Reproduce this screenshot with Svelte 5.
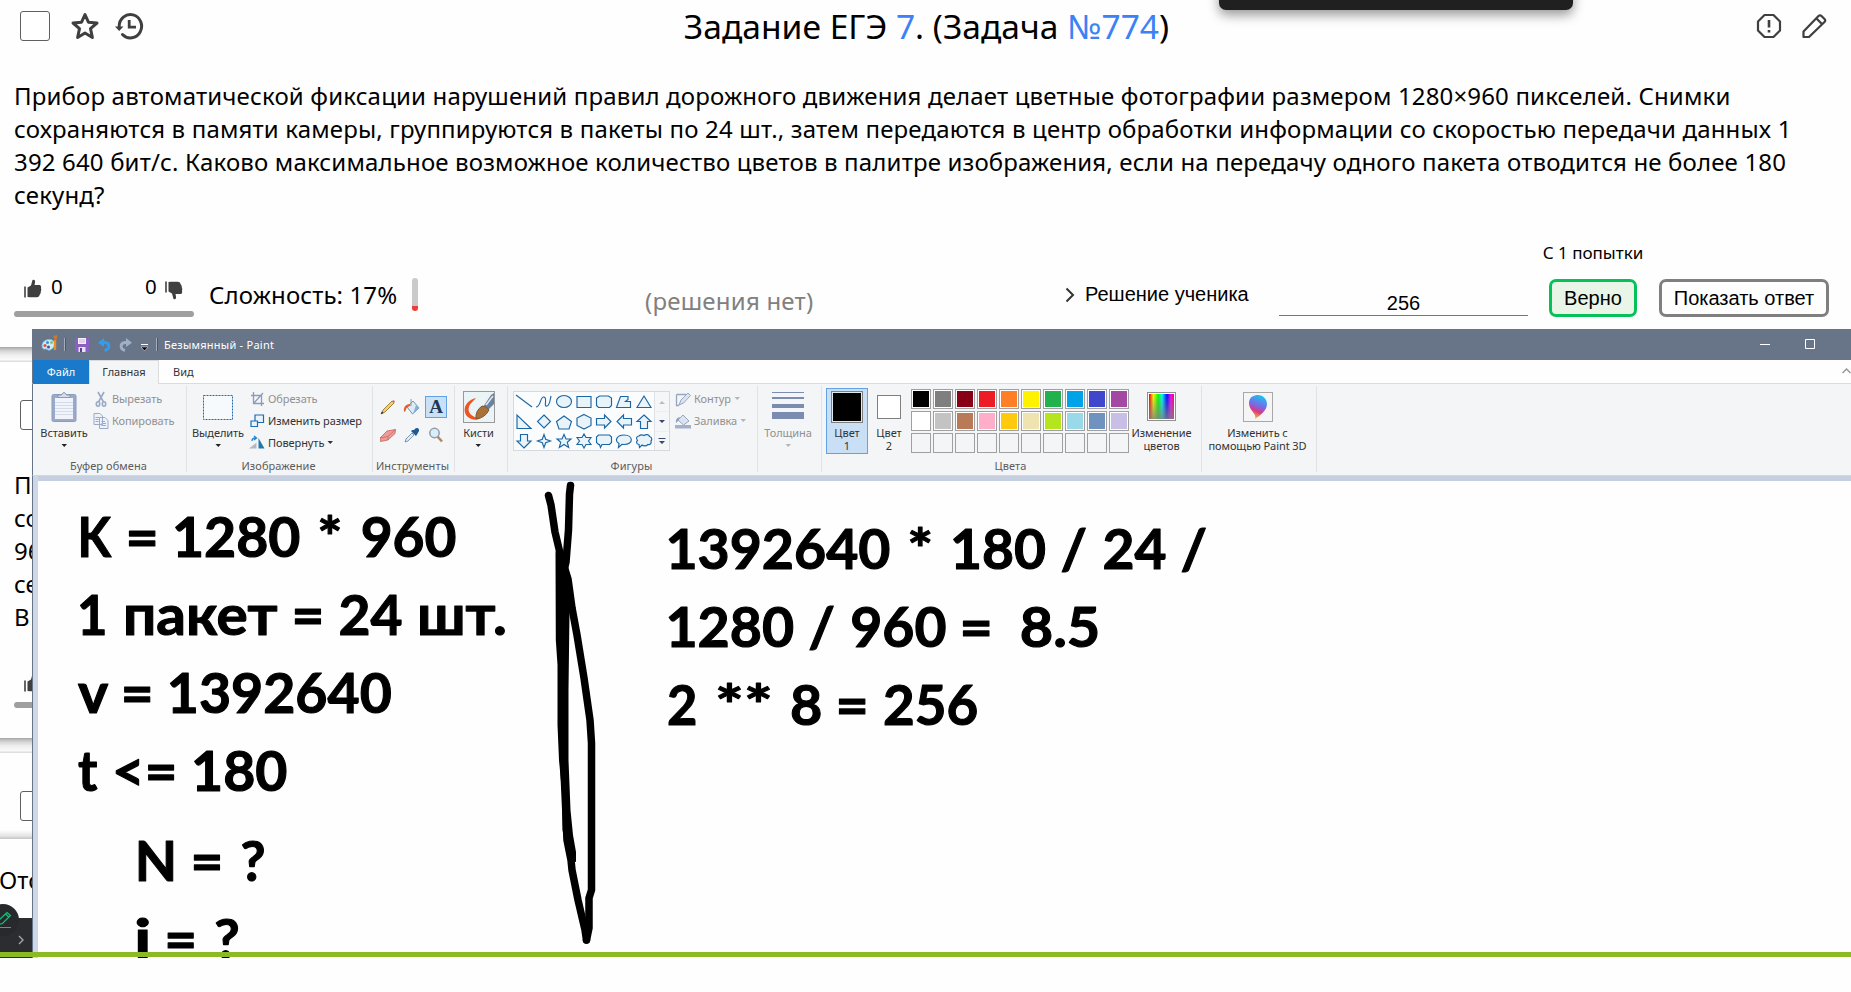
<script>
  const palette = [
    ['#000000', '#7f7f7f', '#880015', '#ed1c24', '#ff7f27', '#fff200', '#22b14c', '#00a2e8', '#3f48cc', '#a349a4'],
    ['#ffffff', '#c3c3c3', '#b97a57', '#ffaec9', '#ffc90e', '#efe4b0', '#b5e61d', '#99d9ea', '#7092be', '#c8bfe7'],
    ['', '', '', '', '', '', '', '', '', '']
  ];

  const shapes = [
    'M2 3L18 15',
    'M2 15C7 15 6 4 10 5C14 6 9 15 13 14C16 13 16 8 17 4',
    'M2.5 9.5A7.5 6 0 1 1 17.5 9.5A7.5 6 0 1 1 2.5 9.5Z',
    'M3 4.5H17V15.5H3Z',
    'M5.500 4H14.500L17.500 6V13.500L15.500 15.500H4.500L2.500 13.500V6Z',
    'M6.500 4.500H14V7.500L11.500 9.500H16.500V15.500H2.500Z',
    'M10 4L17 15.500H3Z',
    'M3 3V16.500H17Z',
    'M10 3L16.500 9.500L10 16L3.500 9.500Z',
    'M10 4L17.500 9.500L15 17H5L2.500 9.500Z',
    'M10 2.500L17 6V13.500L10 17L3 13.500V6Z',
    'M2.500 6.500H10.500V3L17 9.500L10.500 16V13H2.500Z',
    'M17.500 6.500H9.500V3L3 9.500L9.500 16V13H17.500Z',
    'M10 3L17 9.500H13.500V16.500H6.500V9.500H3Z',
    'M10 17L17 10H13.500V3.500H6.500V10H3Z',
    'M10 3.500L11.700 8.300L16.500 10L11.700 11.700L10 16.500L8.300 11.700L3.500 10L8.300 8.300Z',
    'M10 3.500L12 8H17L13.300 11.300L14.700 16.500L10 13.500L5.300 16.500L6.700 11.300L3 8H8Z',
    'M10 3L12 6.500H17L14.500 10L17 13.500H12L10 17L8 13.500H3L5.500 10L3 6.500H8Z',
    'M4.500 4H15.500L17.500 6V11.500L15.500 13.500H8L6.500 16.500L5.500 13.500H4.500L2.500 11.500V6Z',
    'M10 4C19.500 4 20 13.500 10 13.500L8 13.300L4.500 16.500L5 12.500C0 9.500 3 4 10 4Z',
    'M5 5C7 3 9 4 10 4.500C12 3 15 3.500 15.500 5.500C18.500 6.500 18 9 17 10C18 13 15.500 14 14 13.500C12 15.500 9 15 8 14L5.500 16.500L5 13.500C2 13 2 10.500 3.500 9.500C1.500 7 3 5 5 5Z'
  ];

  // Each word of a handwritten line: text, left edge, right edge
  const notes = [
    { y: 556.5, words: [['K', 81, 111], ['=', 128.5, 155.8], ['1280', 176, 299], ['*', 318.3, 341.6], ['960', 362.2, 455]] },
    { y: 634.5, words: [['1', 81, 106], ['пакет', 126, 277.6], ['=', 294.6, 321.5], ['24', 340, 401], ['шт.', 420, 504]] },
    { y: 712.5, words: [['v', 77.9, 106.8], ['=', 123.8, 150.7], ['1392640', 170.8, 390.3]] },
    { y: 790.5, words: [['t', 77.9, 97.3], ['<=', 115, 174.4], ['180', 195, 286]] },
    { y: 880.5, words: [['N', 138.8, 173.2], ['=', 193.4, 220.3], ['?', 240.4, 264.5]] },
    { y: 958.5, words: [['i', 138, 147.5], ['=', 167.3, 194.2], ['?', 214.3, 238.8]] },
    { y: 568.5, words: [['1392640', 669.4, 889], ['*', 908.2, 932.2], ['180', 953.9, 1044.5], ['/', 1060.4, 1087], ['24', 1104, 1165], ['/', 1180.4, 1207]] },
    { y: 646.5, words: [['1280', 669.4, 792.7], ['/', 808.2, 835], ['960', 851.8, 945], ['=', 962.4, 989.8], ['8.5', 1021.2, 1098.8]] },
    { y: 724.5, words: [['2', 668.6, 696], ['**', 716, 771.8], ['8', 791.4, 820.8], ['=', 838.4, 865.7], ['256', 884.5, 976.7]] }
  ];

  // Side bearings on the left and on the right of a word
  function bearing(c) {
    if (c === '=' || c === '<=') return [3, 3];
    if (c === '/' || c === 'v' || c === 't') return [0, 0];
    if (c[0] === '*') return [1, 1];
    if (c === 'K') return [3.5, 0];
    if (c === 'N' || c === 'i') return [4, 4];
    if (c[0] === '1') return [4, 1.5];
    if (c === 'пакет') return [3, 0];
    if (c === 'шт.') return [3, 3];
    if (c === '?') return [0, 1];
    return [1.5, 1.5];
  }
</script>

{#snippet thumb(down)}
  <svg class="thumb" class:down width="18" height="19" viewBox="0 0 18 19">
    <path d="M1 7.500V18.500" stroke="#3f3f3f" stroke-width="1.600" />
    <path d="M3.500 18V8.500L7 6.500L8.500 1Q11.500 0 11 3.500L10.500 6H16Q17.800 7 17 9.500Q17.800 11 16.800 12.500Q17 14.500 15.800 15.500Q15.500 18 13 18.200H6Z" fill="#3f3f3f" />
  </svg>
{/snippet}

{#snippet caret()}
  <svg class="caret" width="7" height="4" viewBox="0 0 7 4"><path d="M.5 0H6L3.250 3Z" fill="currentColor" /></svg>
{/snippet}

<div class="page">
  <section class="card first">
    <header>
      <div class="tools-left">
        <span class="check"></span>
        <svg width="30" height="30" viewBox="0 0 30 30" fill="none" stroke="#3f3f3f" stroke-width="3" stroke-linejoin="round"><path d="M15 3.500L18.400 11.200L27 12L20.500 17.600L22.400 26.500L15 21.900L7.600 26.500L9.500 17.600L3 12L11.600 11.200Z" /></svg>
        <svg width="30" height="30" viewBox="0 0 30 30" fill="none" stroke="#3f3f3f" stroke-width="3"><path d="M5.200 15.500A11.200 11.700 0 1 1 8.500 23.500" stroke-linecap="round" /><path d="M1 15.500H9.500L5.200 20Z" fill="#3f3f3f" stroke="none" /><path d="M15.200 9V16.200H22" stroke-width="2.800" /></svg>
      </div>
      <h1>Задание ЕГЭ <a>7</a>. (Задача <a>№774</a>)</h1>
      <div class="tools-right">
        <svg width="26" height="26" viewBox="0 0 26 26" fill="none" stroke="#3f3f3f" stroke-width="2.200"><path d="M8.500 2H17.500L24 8.500V17.500L17.500 24H8.500L2 17.500V8.500Z" stroke-linejoin="round" /><path d="M13 7V14.500M13 17V19.500" stroke-width="2.600" /></svg>
        <svg width="26" height="26" viewBox="0 0 26 26" fill="none" stroke="#3f3f3f" stroke-width="2.200" stroke-linejoin="round"><path d="M2.500 24V18.500L17.500 3Q19 1.500 20.500 3L23.500 6Q25 7.500 23.500 9L8 24Z" /><path d="M15.500 5.500L21 11" /></svg>
      </div>
    </header>
    <p class="task">Прибор автоматической фиксации нарушений правил дорожного движения делает цветные фотографии размером 1280×960 пикселей. Снимки<br />сохраняются в памяти камеры, группируются в пакеты по 24 шт., затем передаются в центр обработки информации со скоростью передачи данных 1<br />392 640 бит/с. Каково максимальное возможное количество цветов в палитре изображения, если на передачу одного пакета отводится не более 180<br />секунд?</p>
    <div class="row">
      <div class="votes">
        <div class="counts">
          {@render thumb(false)}<span>0</span><span class="second">0</span>{@render thumb(true)}
        </div>
        <div class="votebar"></div>
      </div>
      <div class="level">Сложность: 17%</div>
      <div class="meter"></div>
      <div class="none">(решения нет)</div>
      <div class="student">
        <svg width="11" height="16" viewBox="0 0 11 16" fill="none" stroke="#333" stroke-width="2"><path d="M1.500 1.500L8 8L1.500 14.500" /></svg>
        <span>Решение ученика</span>
      </div>
      <div class="answer">256</div>
      <div class="attempt"><span>С 1 попытки</span><button class="ok">Верно</button></div>
      <button class="show">Показать ответ</button>
    </div>
  </section>
  <div class="gap"></div>

  <section class="card second-card">
    <span class="check"></span>
    <p>Прибор<br />сохран<br />960 пи<br />секунд<br />В отве</p>
    <div class="icon-row">{@render thumb(false)}</div>
    <div class="votebar"></div>
  </section>
  <div class="gap"></div>
  <section class="card third"><span class="check"></span></section>
  <div class="sent">Отсут</div>

  <div class="dark-dock"><svg width="7" height="10" viewBox="0 0 7 10" fill="none" stroke="#a5a5a8" stroke-width="1.400"><path d="M1 1L5 5L1 9" /></svg></div>
  <div class="dark-round">
    <svg width="18" height="18" viewBox="0 0 18 18" fill="none" stroke="#12c27b" stroke-width="1.200"><path d="M1 14L3 9L11 1.500L14.500 4.500L6.500 12.500ZM9.500 3L12.800 6M0 16.500H15" /></svg>
  </div>
  <div class="top-dock"></div>

  <div class="paint">
    <div class="titlebar">
      <svg class="logo" width="18" height="18" viewBox="0 0 18 18"><path d="M1 11C1 6 6 3.500 11 5C16 7 14 13 9 15C7 16 6 13.500 4.500 14C2.500 14.500 1 13.500 1 11Z" fill="#c9eaf6" stroke="#6bbbe0" stroke-width=".8" /><circle cx="4" cy="10.500" r="1.500" fill="#e94b35" /><circle cx="6.500" cy="7.500" r="1.500" fill="#3b8ede" /><circle cx="10.500" cy="7.500" r="1.300" fill="#71bf44" /><circle cx="7.500" cy="12" r="1.500" fill="#4a4f9e" /><path d="M14 5V15" stroke="#ef8a28" stroke-width="2.400" /><path d="M12 1L16 0V4L14 5Z" fill="#c7793c" /></svg>
      <i></i>
      <svg class="save" width="14" height="14" viewBox="0 0 14 14"><path d="M0 0H14V14H2L0 12Z" fill="#8861c2" /><path d="M3 0H11V6H3Z" fill="#f7f0fa" /><path d="M4 2H10M4 4H10" stroke="#c9b6dd" /><path d="M3.500 9H10.500V14H3.500Z" fill="#e9e2f2" /><path d="M5 10H7V14H5Z" fill="#5c3d91" /></svg>
      <svg class="undo" width="13" height="14" viewBox="0 0 13 14" fill="none"><path d="M2 4.500H7C12 5 12.500 11 6.500 12.500" stroke="#2f9df0" stroke-width="2.800" /><path d="M0 4.800L6 0V9Z" fill="#2f9df0" /></svg>
      <svg class="redo" width="13" height="14" viewBox="0 0 13 14" fill="none"><path d="M10 4.500H6C1 5 .5 11 6 12.500" stroke="#9fafc6" stroke-width="2.800" /><path d="M13 4.800L7 0V9Z" fill="#9fafc6" /></svg>
      <svg class="more" width="7" height="7" viewBox="0 0 7 7"><path d="M0 .5H7" stroke="#fff" /><path d="M0 3H7L3.500 6.800Z" fill="#000" stroke="#fff" stroke-width=".5" /></svg>
      <i></i>
      <span>Безымянный - Paint</span>
      <svg class="win" width="56" height="11" viewBox="0 0 56 11" fill="none" stroke="#fff"><path d="M0 5.500H10M45.500 .5H54.500V9.500H45.500Z" /></svg>
    </div>
    <div class="tabs">
      <span class="file">Файл</span><span class="home">Главная</span><span class="view">Вид</span>
      <svg width="9" height="6" viewBox="0 0 9 6" fill="none" stroke="#999" stroke-width="1.500"><path d="M.5 5L4.500 1L8.500 5" /></svg>
    </div>

    <div class="ribbon">
      <div class="group g1">
        <div class="body">
          <div class="big">
            <svg width="26" height="32" viewBox="0 0 26 32"><rect x="1" y="3.500" width="24" height="27" rx="1.500" fill="#9aabc9" stroke="#8c9cbb" /><path d="M4 7H22V28H4Z" fill="#f1f4fa" /><path d="M4 11.500H22M4 14.500H22M4 17.500H22M4 20.500H22M4 23.500H22" stroke="#d3dbea" /><path d="M7 6.500V4H10.500Q13 -1 15.500 4H19V6.500Z" fill="#d6deeb" stroke="#8797b6" /></svg>
            <b>Вставить</b>{@render caret()}
          </div>
          <div class="list dim">
            <div><svg width="16" height="16" viewBox="0 0 16 16" fill="none" stroke="#9aa9c4" stroke-width="1.600"><path d="M5 1L10.500 11M11 1L5.500 11" /><ellipse cx="5" cy="13" rx="1.700" ry="2.200" /><ellipse cx="11" cy="13" rx="1.700" ry="2.200" /></svg><b>Вырезать</b></div>
            <div><svg width="16" height="16" viewBox="0 0 16 16" fill="#eef2f9" stroke="#9aabc9"><path d="M1 .5H7L9.500 3V11.500H1ZM6.500 4.500H12L15 7.500V15.500H6.500Z" /><path d="M2.500 4.500H6M2.500 6.500H5.500M2.500 8.500H5.500M8.500 8.500H12M8.500 10.500H13M8.500 12.500H13" /></svg><b>Копировать</b></div>
          </div>
        </div>
        <footer>Буфер обмена</footer>
      </div>

      <div class="group g2">
        <div class="body">
          <div class="big">
            <svg width="32" height="32" viewBox="0 0 32 32"><rect x="1.500" y="4.500" width="29" height="24" fill="#f6fafd" stroke="#1f6ab0" stroke-dasharray="2 1" /></svg>
            <b>Выделить</b>{@render caret()}
          </div>
          <div class="list">
            <div class="dim"><svg width="16" height="16" viewBox="0 0 16 16" fill="none" stroke="#8b9bb9"><path d="M4.500 1V12.500H15M2 4.500H12.500V15M4.500 12.500L14 2" stroke-width="1.300" /></svg><b>Обрезать</b></div>
            <div><svg width="16" height="16" viewBox="0 0 16 16" fill="#e9f3fb" stroke="#1f6ab0" stroke-width="1.200"><path d="M6 2H14.500V9.500H6Z" /><path d="M2 8H8.500V13.500H2Z" /></svg><b>Изменить размер</b></div>
            <div><svg width="16" height="16" viewBox="0 0 16 16"><path d="M0 13.500L7.500 7.500V13.500Z" fill="#b4b8bf" /><path d="M9.500 3L15.500 13.500H9.500Z" fill="#1e7aa8" /><path d="M3 6Q3 3 6.500 3M5 1L7.500 3L5 5" fill="none" stroke="#2583d3" stroke-width="1.300" /></svg><b>Повернуть</b>{@render caret()}</div>
          </div>
        </div>
        <footer>Изображение</footer>
      </div>

      <div class="group g3">
        <div class="toolgrid">
          <span><svg width="16" height="16" viewBox="0 0 16 16"><path d="M1 15L3 11L12 2L14 4L5 13Z" fill="#f4cf63" stroke="#8d6b2c" stroke-width=".8" /><path d="M12 2L14 4L15 2.500L13.500 1Z" fill="#d7736c" /><path d="M1 15L2 12.500L3.500 14Z" fill="#222" /></svg></span>
          <span><svg width="18" height="16" viewBox="0 0 18 16"><path d="M4 8L10 2L16 9L9.500 15Z" fill="#dcebf5" stroke="#6d96b8" /><path d="M8 0V7" stroke="#7e9db4" /><path d="M1 13Q0 6 6 5L8 6L3.500 9Q3 12 1 13Z" fill="#ea5a2b" /><path d="M13 6L16 9L10 15Z" fill="#82b4d6" /></svg></span>
          <span class="on"><em>A</em></span>
          <span><svg width="16" height="16" viewBox="0 0 16 16"><path d="M0 11L7 4L15.500 2.500L15 6.500L8 13L.5 14.500Z" fill="#ee9b98" stroke="#c4625f" stroke-width=".8" /><path d="M0 11L8 9.500L15.500 2.500M8 9.500V13" fill="none" stroke="#c4625f" stroke-width=".7" /></svg></span>
          <span><svg width="16" height="16" viewBox="0 0 16 16"><path d="M1 15L2 12L8 6L10 8L4 14Z" fill="#dfeaf2" stroke="#5d83a1" stroke-width=".8" /><path d="M7 4L12 9L13 7.500L15 4Q15.500 1.500 13.500 1Q11.500 .5 10 3L8.500 3Z" fill="#1c5a96" /></svg></span>
          <span><svg width="16" height="16" viewBox="0 0 16 16"><path d="M9.500 9.500L14 14.500" stroke="#ad8a6d" stroke-width="2.600" /><circle cx="6.500" cy="6" r="4.700" fill="#d9eefb" stroke="#929ba6" stroke-width="1.500" /></svg></span>
        </div>
        <footer>Инструменты</footer>
      </div>

      <div class="group g4">
        <div class="big">
          <svg width="32" height="32" viewBox="0 0 32 32"><rect x=".5" y=".5" width="31" height="31" fill="#eaf4f6" stroke="#999" /><path d="M13 7C4 9 -1 17 3 24C6 29 15 30 17 27C9 27 4 21 6 16C7 12 11 10 13 7Z" fill="#ee5524" /><path d="M20 16L28 4L31 2V13L25 19Z" fill="#6982a0" /><path d="M23 14L30 5" stroke="#dfe8ef" stroke-width="1.600" /><path d="M13 28Q12 20 19 15Q24 15 26 19Q22 27 13 28Z" fill="#a9703a" stroke="#855528" /></svg>
          <b>Кисти</b>{@render caret()}
        </div>
      </div>

      <div class="group g5">
        <div class="body">
          <div class="gallery">
            <div class="cells">
              {#each shapes as d}
                <svg width="20" height="20" viewBox="0 0 20 20"><path {d} fill={d.length < 11 || d.startsWith('M2 15C') ? 'none' : '#e9f4fa'} stroke="#1c66a4" stroke-width="1.150" /></svg>
              {/each}
            </div>
            <div class="scroll">
              <svg width="14" height="58" viewBox="0 0 14 58"><path d="M4 12L7 9L10 12Z" fill="#b9bdc6" /><path d="M4 28H10L7 31ZM4 49H10L7 52Z" fill="#3b4a6b" /><path d="M3.500 46.500H10.500" stroke="#3b4a6b" /><path d="M0 19.500H14M0 39.500H14" stroke="#eceef2" /></svg>
            </div>
          </div>
          <div class="list dim">
            <div><svg width="16" height="16" viewBox="0 0 16 16"><path d="M1.500 3.500H11M1.500 3.500V14.500H4" fill="none" stroke="#96a5c2" stroke-width="1.300" /><path d="M4 14L6 9L13 2L15.500 4.500L8.500 12Z" fill="#dbe3ef" stroke="#96a5c2" /></svg><b>Контур</b>{@render caret()}</div>
            <div><svg width="16" height="16" viewBox="0 0 16 16"><path d="M3 7L8 2L14 8L8.500 12Z" fill="#dbe3ef" stroke="#96a5c2" /><path d="M1 10Q0 5 5 4L3 8Z" fill="#8f9fbe" /><path d="M0 12H16V15.500H0Z" fill="#a2b0ca" /></svg><b>Заливка</b>{@render caret()}</div>
          </div>
        </div>
        <footer>Фигуры</footer>
      </div>

      <div class="group g6">
        <div class="big dim">
          <svg width="32" height="32" viewBox="0 0 32 32" fill="#7b8cb0"><path d="M0 1H32V2H0ZM0 6H32V8H0ZM0 13H32V17H0ZM0 21H32V28H0Z" /></svg>
          <b>Толщина</b>{@render caret()}
        </div>
      </div>

      <div class="group g7">
        <div class="body">
          <div class="color on"><i class="sw one"></i><b>Цвет<br />1</b></div>
          <div class="color"><i class="sw two"></i><b>Цвет<br />2</b></div>
          <div class="palette">
            {#each palette as line}
              {#each line as c}
                <i class:empty={!c} style:background-color={c || null}></i>
              {/each}
            {/each}
          </div>
          <div class="big edit">
            <span class="spectrum"></span>
            <b>Изменение<br />цветов</b>
          </div>
        </div>
        <footer>Цвета</footer>
      </div>

      <div class="group g8">
        <div class="big">
          <svg width="30" height="32" viewBox="0 0 30 32">
            <defs>
              <linearGradient id="drop" x1=".7" y1="0" x2=".4" y2="1"><stop offset="0" stop-color="#15c9ef" /><stop offset=".45" stop-color="#776bea" /><stop offset=".7" stop-color="#d93a7e" /><stop offset="1" stop-color="#ffc020" /></linearGradient>
            </defs>
            <rect x=".5" y="1.500" width="29" height="29" fill="#f5f5f5" stroke="#a8a8a8" /><path d="M12 28C14 22 6 20 6 12C6 6 11 4 15 4C20 4 24 8 24 13C24 20 16 25 12 28Z" fill="url(#drop)" /></svg>
          <b>Изменить с<br />помощью Paint 3D</b>
        </div>
      </div>
    </div>

    <div class="canvas">
      <svg width="1813" height="477" viewBox="38 481 1813 477">
        {#each notes as n}
          <text y={n.y}>
            {#each n.words as [w, l, r], i}
              {@const b = bearing(w)}{i ? ' ' : ''}<tspan x={l - b[0]} textLength={r - l + b[0] + b[1]} lengthAdjust="spacingAndGlyphs">{w}</tspan>
            {/each}
          </text>
        {/each}
        <g fill="none" stroke="#000" stroke-width="7.500" stroke-linecap="round" stroke-linejoin="round">
          <path d="M548.500 495.500L551 505L555 532L560 553L568 579L572 608L577 635L584 678L590 720L591.500 743V890L589 898V928L586.500 940" />
          <path d="M570.500 485.500L569.500 494L568.500 530L566 562L562 578L562 640L563.500 700V760L566 815L567 840L571 860L572 870L578 900L585 930L586.500 940" />
        </g>
        <path d="M555.500 551L569 575L569.500 612L568.500 690V760L570.500 810L573 835L576 852V862L568 860L562.500 830L562 792L559 760L557.500 725V665L555.800 640Z" />
      </svg>
    </div>
  </div>
  <div class="green"></div>
</div>

<style>
  :global(body) { background: #fefefe; }
  .page { position: relative; width: 1851px; height: 992px; overflow: hidden; background: #fefefe; font-family: "Noto Sans", sans-serif; font-size: 24px; color: #000; white-space: nowrap; }
  .page :global(svg) { flex: none; display: block; }
  h1, p { margin: 0; font-weight: 400; }
  b { font-weight: 400; }
  .card { box-sizing: border-box; background: #fefefe; }
  .gap { height: 15px; background: linear-gradient(#a2a2a2 0, #b4b4b4 1px, #d6d6d6 4px, #eee 8px, #fafafa 13px, #dedede 14px, #dedede 15px); }
  .first { height: 347px; }
  header { display: grid; grid-template-columns: 1fr auto 1fr; height: 79px; }
  .tools-left { display: flex; padding: 11px 0 0 20px; gap: 20px; align-items: flex-start; }
  .tools-left svg + svg { margin-left: -6.500px; }
  .check { box-sizing: border-box; width: 30px; height: 30px; border: 1px solid #606060; border-radius: 3px; background: #fff; display: block; flex: none; }
  h1 { font-size: 33.600px; padding: 3px 0 0 2px; }
  a { color: #3b82f6; }
  .tools-right { display: flex; justify-content: flex-end; gap: 19px; padding: 13px 24px 0 0; }
  .task { padding-left: 14px; height: 161px; letter-spacing: .16px; }
  .row { display: grid; grid-template-columns: 195px 203px 233px 419px 215px 262px 118px 170px; padding-left: 14px; height: 78px; align-items: start; }
  .votes { width: 180px; height: 77px; display: flex; flex-direction: column; justify-content: flex-end; }
  .counts { display: flex; font-size: 20.500px; align-items: flex-start; padding-left: 10px; height: 39px; }
  .counts span { width: 12px; margin-left: 9px; }
  .counts .second { margin-left: 82px; margin-right: 8px; }
  .thumb { margin-top: 7px; }
  .thumb.down { transform: rotate(180deg) scaleX(-1); margin-top: 9px; }
  .votebar { width: 180px; height: 6px; border-radius: 3px; background: #9f9f9f; }
  .level { padding-top: 38px; letter-spacing: .14px; }
  .meter { width: 6px; height: 33px; border-radius: 3px; margin-top: 38px; background: linear-gradient(#cacaca 28px, #ec3d3d 28px); }
  .none { padding-top: 44px; color: #808080; letter-spacing: .22px; }
  .student { display: flex; gap: 9px; font: 20px "Liberation Sans", sans-serif; padding: 43px 0 0 1px; }
  .student svg { margin-top: 4px; }
  .answer { width: 249px; height: 76px; box-sizing: border-box; padding-top: 52px; border-bottom: 1px solid #777; font: 20px "Liberation Sans", sans-serif; text-align: center; }
  .attempt { width: 104px; display: flex; flex-direction: column; align-items: center; font-size: 17px; line-height: 22px; padding-top: 2px; }
  button { box-sizing: border-box; height: 38px; padding: 0; border: 3px solid #7f7f7f; border-radius: 7px; font: 20px "Liberation Sans", sans-serif; background: #fefefe; color: #000; }
  .ok { width: 88px; margin-top: 15px; border-color: #06c15a; background: #e8f5e7; }
  .show { width: 170px; margin-top: 39px; }
  .second-card { height: 376px; padding-top: 38px; }
  .second-card .check, .third .check { margin-left: 20px; }
  .second-card p { margin: 38px 0 0 14px; }
  .icon-row { display: flex; margin: 33px 0 0 24px; }
  .second-card .votebar { margin: 10px 0 0 14px; }
  .third { height: 86px; padding-top: 38px; background: linear-gradient(#fefefe 77px, #e4e4e4 83px, #c4c4c4 86px); }
  .sent { margin-top: 24px; margin-left: -1px; }
  .dark-dock { position: absolute; left: 0; top: 918px; width: 60px; height: 40px; background: #2c2d31; }
  .dark-dock svg { margin: 17px 0 0 18px; }
  .dark-round { position: absolute; left: -13px; top: 904px; width: 32px; height: 32px; border-radius: 50%; background: #28292d; overflow: hidden; }
  .dark-round svg { margin: 7px 0 0 9px; }
  .top-dock { position: absolute; left: 1219px; top: -20px; width: 354px; height: 30px; background: #202020; border-radius: 7px; box-shadow: 0 5px 12px rgba(0, 0, 0, .4); }
  .green { position: absolute; left: 0; top: 952px; width: 1851px; height: 5px; background: #8abb24; }

  .paint { position: absolute; left: 32px; top: 329px; width: 1819px; height: 629px; overflow: hidden; font-size: 11px; line-height: 16px; color: #333; background: #fefefe; display: flex; flex-direction: column; }
  .titlebar { height: 31px; flex: none; background: #687588; display: flex; align-items: center; color: #fff; padding-left: 9px; letter-spacing: .25px; }
  .titlebar i { width: 1px; height: 13px; background: #a4adba; border-right: 1px solid #4c586a; margin: 0 9px 0 5px; }
  .titlebar .logo { margin-top: -2px; }
  .undo { margin-left: 9px; }
  .redo { margin-left: 8px; }
  .more { margin: 6px 3px 0 9px; }
  .titlebar i ~ i { margin-right: 6px; }
  .titlebar .win { margin-left: auto; margin-right: 35px; }
  .tabs { height: 23px; flex: none; display: flex; border-left: 1px solid #687588; border-bottom: 1px solid #dadbdc; line-height: 23px; }
  .file { width: 56px; height: 24px; text-align: center; color: #fff; background: #1979ca; }
  .home { box-sizing: border-box; width: 70px; height: 24px; border: 1px solid #dadbdc; border-bottom: 0; background: #f4f5f7; text-align: center; line-height: 21px; }
  .view { margin-left: 14px; }
  .tabs svg { margin: 8px 0 0 auto; }
  .ribbon { height: 91px; flex: none; display: flex; background: #f4f5f7; border-left: 1px solid #687588; border-bottom: 1px solid #d5d6d8; }
  .group { box-sizing: border-box; height: 86px; margin-top: 2px; border-right: 1px solid #e1e2e4; display: flex; flex-direction: column; }
  .body { display: flex; height: 71px; }
  footer { margin-top: auto; padding-right: 2px; text-align: center; color: #5c5c5c; height: 14px; letter-spacing: .08px; }
  .big { display: flex; flex-direction: column; align-items: center; padding-top: 5px; color: #333; text-align: center; line-height: 13px; letter-spacing: -.08px; }
  .big b { margin-top: 3px; }
  .big .caret { margin-top: 5px; }
  .big > .caret { color: #222; }
  .list { display: flex; flex-direction: column; padding-top: 2px; }
  .list div { height: 22px; display: flex; align-items: center; gap: 3px; line-height: 22px; letter-spacing: -.08px; }
  .dim, .dim b { color: #919191; }
  .big.dim .caret, .list.dim .caret { color: #b5b5b5; }
  .g1 { width: 154px; }
  .g1 .big { width: 62px; }
  .g1 .list { margin-left: -2px; }
  .g2 { width: 186px; }
  .g2 .big { width: 62px; }
  .g3 { width: 82px; }
  .toolgrid { display: grid; grid-template-columns: repeat(3, 22px); gap: 6px 2px; padding: 10px 0 0 4px; }
  .toolgrid span { box-sizing: border-box; width: 22px; height: 22px; display: flex; align-items: center; justify-content: center; }
  .toolgrid .on { background: #c9e0f7; border: 1px solid #62a2e4; }
  em { font: bold 19px/20px "Liberation Serif", serif; color: #1e3658; }
  .g4 { width: 53px; }
  .g4 .big { padding-right: 5px; }
  .g5 { width: 250px; }
  .gallery { display: flex; box-sizing: border-box; width: 157px; height: 60px; margin: 5px 5px 0 5px; border: 1px solid #d6d9de; background: #fbfcfd; }
  .cells { display: grid; grid-template-columns: repeat(7, 20px); grid-auto-rows: 19.700px; width: 141px; }
  .scroll { border-left: 1px solid #dfe2e6; background: #f5f6f8; }
  .g6 { width: 64px; }
  .g6 .big { padding-right: 3px; }
  .g7 { width: 380px; }
  .color { box-sizing: border-box; width: 42px; height: 66px; margin: 2px 0 0 4px; display: flex; flex-direction: column; align-items: center; text-align: center; line-height: 13px; border: 1px solid transparent; }
  .color + .color { margin-left: 0; }
  .color.on { background: #c9dff5; border-color: #62a2e4; }
  .color b { margin-top: 3px; }
  .sw { box-sizing: border-box; border: 1px solid #7f7f7f; }
  .one { width: 32px; height: 32px; margin-top: 2px; background: #000; box-shadow: inset 0 0 0 1px #dfeaf5; }
  .two { width: 24px; height: 24px; margin: 6px 0 4px; background: #fff; }
  .palette { display: grid; grid-template-columns: repeat(10, 20px); grid-auto-rows: 20px; gap: 2px; margin: 3px 0 0 1px; }
  .palette i { border: 1px solid #a0a0a0; box-shadow: inset 0 0 0 1px #fff; }
  .palette .empty { box-shadow: none; }
  .edit { width: 65px; }
  .spectrum { box-sizing: border-box; width: 29px; height: 29px; margin: 1px 0 2px; border: 1px solid #8f8f8f; box-shadow: inset 0 0 0 1px #fff; background: linear-gradient(rgba(128, 128, 128, 0), rgba(128, 128, 128, .85)), linear-gradient(90deg, #f00 5%, #ff0 20%, #0f0 38%, #0ff 52%, #00f 70%, #f0f 85%, #f00); }
  .g8 { width: 115px; }
  .g8 .big { padding-right: 3px; }
  .canvas { flex: 1; border-left: 1px solid #687588; box-shadow: inset 5px 0 #cdd7e7, inset 0 5px #c5cfdf; padding: 5px 0 0 5px; }
  .canvas text { font: bold 56px Lato, "Noto Sans", sans-serif; stroke: #000; stroke-width: 1.100px; stroke-linejoin: round; }
</style>
